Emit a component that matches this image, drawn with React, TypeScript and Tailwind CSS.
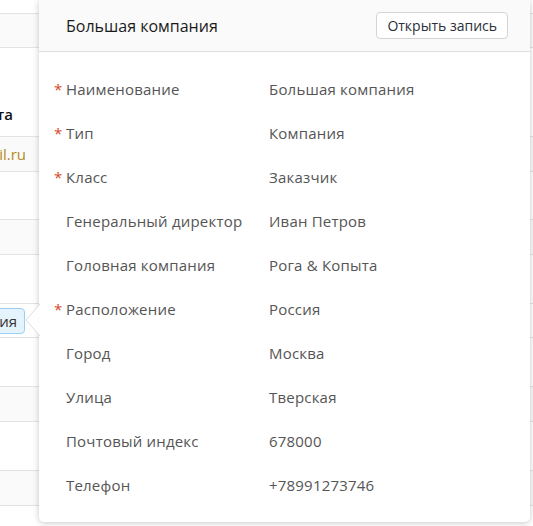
const fields: { label: string; value: string; required?: boolean }[] = [
  { label: "Наименование", value: "Большая компания", required: true },
  { label: "Тип", value: "Компания", required: true },
  { label: "Класс", value: "Заказчик", required: true },
  { label: "Генеральный директор", value: "Иван Петров" },
  { label: "Головная компания", value: "Рога & Копыта" },
  { label: "Расположение", value: "Россия", required: true },
  { label: "Город", value: "Москва" },
  { label: "Улица", value: "Тверская" },
  { label: "Почтовый индекс", value: "678000" },
  { label: "Телефон", value: "+78991273746" },
];

function BackgroundTable() {
  return (
    <div className="flex flex-col pt-[13px] text-[15px] text-[#333]">
      <div className="h-[35px] border-t border-b border-[#e3e3e3] bg-[#fafafa]"></div>
      <div className="flex h-[89px] items-end border-b border-[#e3e3e3] pb-[11px]">
        <div className="flex w-[13px] justify-end whitespace-nowrap font-semibold text-[#111]">Почта</div>
      </div>
      <div className="flex h-[35px] items-center border-b border-[#e3e3e3] bg-[#fafafa]">
        <div className="flex w-[26px] justify-end whitespace-nowrap text-[#b58a1c]">mail@mail.ru</div>
      </div>
      <div className="h-[48px] border-b border-[#e3e3e3]"></div>
      <div className="h-[35px] border-b border-[#e3e3e3] bg-[#fafafa]"></div>
      <div className="h-[49px] border-b border-[#e3e3e3]"></div>
      <div className="flex h-[34px] items-center border-b border-[#e3e3e3]">
        <div className="flex w-[25px] justify-end">
          <span className="whitespace-nowrap rounded-[4px] border border-[#9ccff2] bg-[#e5f3fd] px-[7px] py-[2px] leading-[20px] text-[#333]">
            Компания
          </span>
        </div>
      </div>
      <div className="h-[49px] border-b border-[#e3e3e3]"></div>
      <div className="h-[35px] border-b border-[#e3e3e3] bg-[#fafafa]"></div>
      <div className="h-[49px] border-b border-[#e3e3e3]"></div>
      <div className="h-[35px] border-b border-[#e3e3e3] bg-[#fafafa]"></div>
    </div>
  );
}

export default function App() {
  return (
    <div className="relative h-[526px] w-[533px] overflow-hidden bg-white font-['Open_Sans',sans-serif]">
      <BackgroundTable />

      {/* Popover */}
      <div className="absolute left-[39px] top-0 w-[491px] rounded-b-[5px] bg-white shadow-[0_1px_6px_rgba(0,0,0,0.22)]">
        {/* Arrow */}
        <svg className="absolute left-[-14px] top-[304px]" width="15" height="32" viewBox="0 0 15 32">
          <path d="M15 0 L1 16 L15 32 Z" fill="#fff" />
          <path d="M15 0 L1 16 L15 32" fill="none" stroke="#dcdcdc" strokeWidth="1" />
        </svg>

        <div className="flex h-[52px] items-center justify-between border-b border-[#dcdde3] bg-[#fafafb] pl-[27px] pr-[22px]">
          <div className="text-[16px] font-medium text-[#1a1a1a]">Большая компания</div>
          <button className="h-[27px] rounded-[4px] border border-[#d4d4d8] bg-white px-[10px] text-[14px] text-[#2a2f3a]">
            Открыть запись
          </button>
        </div>

        <div className="flex flex-col py-[15px] pl-[15px] text-[15px] tracking-[0.2px] text-[#555]">
          {fields.map((f) => (
            <div key={f.label} className="flex h-[44px] items-center">
              <div className="w-[12px] text-[#d4472a]">{f.required ? "*" : ""}</div>
              <div className="w-[203px]">{f.label}</div>
              <div>{f.value}</div>
            </div>
          ))}
        </div>
      </div>
    </div>
  );
}
